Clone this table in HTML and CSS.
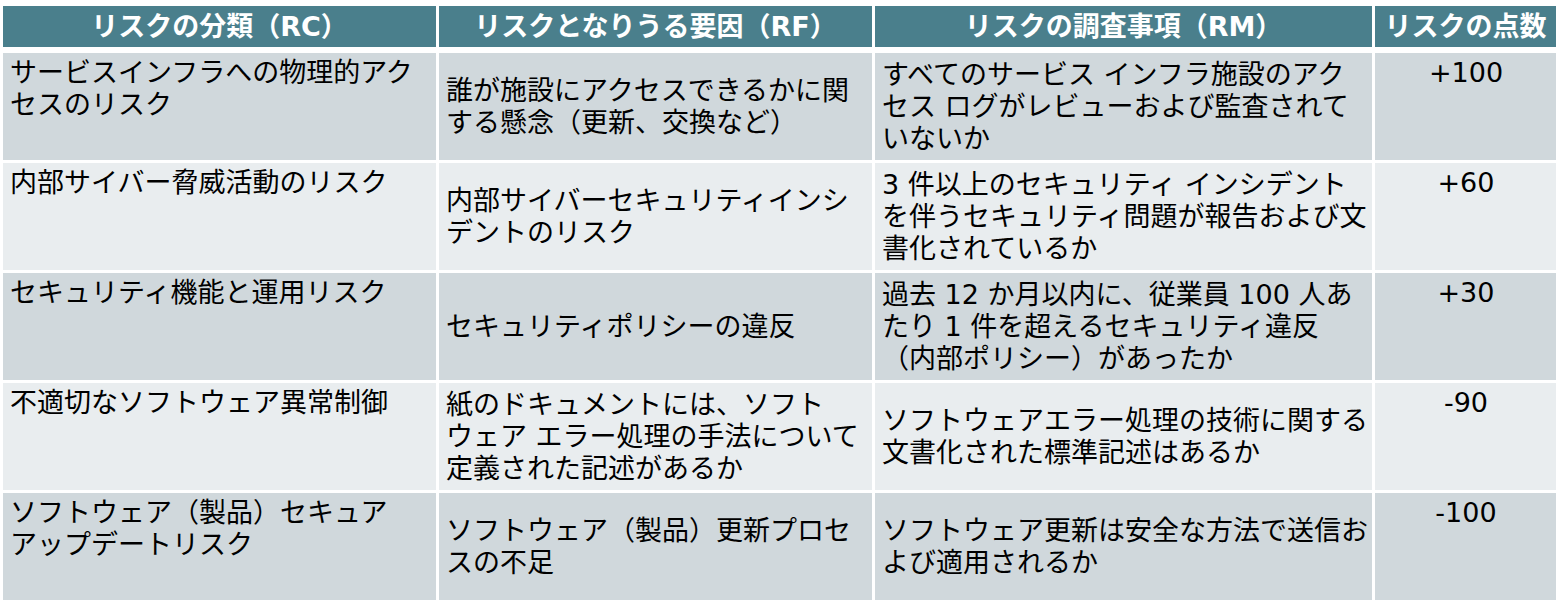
FILE: index.html
```html
<!DOCTYPE html>
<html lang="ja">
<head>
<meta charset="utf-8">
<title>リスク評価表</title>
<link rel="stylesheet" href="styles.css">
</head>
<body>
<div class="page">
  <div class="grid">
    <div class="hd">リスクの分類（RC）</div>
    <div class="hd">リスクとなりうる要因（RF）</div>
    <div class="hd">リスクの調査事項（RM）</div>
    <div class="hd">リスクの点数</div>

    <div class="c top dark">サービスインフラへの物理的アク<br>セスのリスク</div>
    <div class="c mid dark"><span>誰が施設にアクセスできるかに関<br>する懸念（更新、交換など）</span></div>
    <div class="c mid dark"><span>すべてのサービス インフラ施設のアク<br>セス ログがレビューおよび監査されて<br>いないか</span></div>
    <div class="c num dark">+100</div>

    <div class="c top light">内部サイバー脅威活動のリスク</div>
    <div class="c mid light"><span>内部サイバーセキュリティインシ<br>デントのリスク</span></div>
    <div class="c mid light"><span>3 件以上のセキュリティ インシデント<br>を伴うセキュリティ問題が報告および文<br>書化されているか</span></div>
    <div class="c num light">+60</div>

    <div class="c top dark">セキュリティ機能と運用リスク</div>
    <div class="c mid dark"><span>セキュリティポリシーの違反</span></div>
    <div class="c mid dark"><span>過去 12 か月以内に、従業員 100 人あ<br>たり 1 件を超えるセキュリティ違反<br>（内部ポリシー）があったか</span></div>
    <div class="c num dark">+30</div>

    <div class="c top light">不適切なソフトウェア異常制御</div>
    <div class="c mid light"><span>紙のドキュメントには、ソフト<br>ウェア エラー処理の手法について<br>定義された記述があるか</span></div>
    <div class="c mid light"><span>ソフトウェアエラー処理の技術に関する<br>文書化された標準記述はあるか</span></div>
    <div class="c num light">-90</div>

    <div class="c top dark">ソフトウェア（製品）セキュア<br>アップデートリスク</div>
    <div class="c mid dark"><span>ソフトウェア（製品）更新プロセ<br>スの不足</span></div>
    <div class="c mid dark"><span>ソフトウェア更新は安全な方法で送信お<br>よび適用されるか</span></div>
    <div class="c num dark">-100</div>
  </div>
</div>
</body>
</html>
```
FILE: styles.css
```css
html, body {
  margin: 0;
  padding: 0;
  background: #ffffff;
}

.page {
  padding: 6px 0 0 3px;
  font-family: "DejaVu Sans", "Noto Sans CJK JP", sans-serif;
  color: #000000;
}

.grid {
  display: grid;
  grid-template-columns: 433px 433px 497px 181px;
  grid-template-rows: 44px repeat(5, 107px);
  column-gap: 3px;
  row-gap: 3px;
  width: 1553px;
}

.hd {
  background: #4a7f8c;
  border-bottom: 3px solid #ffffff;
  color: #ffffff;
  font-weight: bold;
  font-size: 27px;
  line-height: 41px;
  text-align: center;
  white-space: nowrap;
  overflow: hidden;
}

.c {
  font-size: 27px;
  line-height: 32px;
  white-space: nowrap;
  padding: 4px 6px 4px 7px;
  box-sizing: border-box;
  overflow: hidden;
}

.dark { background: #d0d8dc; }
.light { background: #e9edef; }

.mid {
  display: flex;
  flex-direction: column;
  justify-content: center;
}

.num {
  text-align: center;
}
```
